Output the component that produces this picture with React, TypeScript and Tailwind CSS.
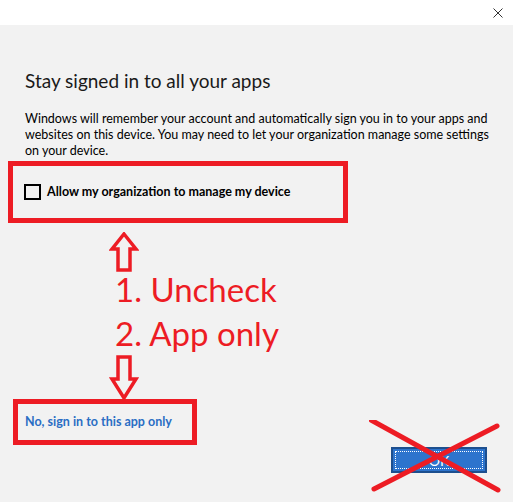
import React from 'react';

const RED = '#ed1c24';

function UpArrow() {
  return (
    <svg width="30" height="41" viewBox="0 0 30 41" className="block">
      <polygon
        points="15,2 27,17 21,17 21,38 9,38 9,17 3,17"
        fill="none"
        stroke={RED}
        strokeWidth="3.5"
        strokeLinejoin="miter"
      />
    </svg>
  );
}

function DownArrow() {
  return (
    <svg width="30" height="46" viewBox="0 0 30 46" className="block">
      <polygon
        points="9,2 21,2 21,24 27,24 15,43 3,24 9,24"
        fill="none"
        stroke={RED}
        strokeWidth="3.5"
        strokeLinejoin="miter"
      />
    </svg>
  );
}

export default function App() {
  return (
    <div
      className="w-[513px] h-[502px] bg-[#f2f2f2] flex flex-col overflow-hidden"
      style={{ fontFamily: 'Lato, "Noto Sans", sans-serif' }}
    >
      {/* title bar */}
      <div className="h-[25px] bg-white flex items-center justify-end pr-[10px] shrink-0">
        <svg width="10" height="10" viewBox="0 0 10 10">
          <path d="M0.5 0.5 L9.5 9.5 M9.5 0.5 L0.5 9.5" stroke="#333" strokeWidth="1" />
        </svg>
      </div>

      <div className="flex flex-col pl-[25px] pr-[22px] relative flex-1">
        <h1 className="mt-[42px] text-[19px] leading-[28px] text-[#1a1a1a] font-normal">
          Stay signed in to all your apps
        </h1>
        <p className="mt-[16px] text-[12.5px] leading-[16px] text-black">
          Windows will remember your account and automatically sign you in to your apps and
          websites on this device. You may need to let your organization manage some settings
          on your device.
        </p>

        {/* annotated checkbox */}
        <div className="ml-[-17px] mt-[2px] w-[340px] h-[62px] border-[5px] border-[#ed1c24] flex items-center pl-[11px] gap-[6px]">
          <div className="w-[17px] h-[16px] border-2 border-black bg-transparent" />
          <span className="text-[12.5px] font-bold text-black">
            Allow my organization to manage my device
          </span>
        </div>

        {/* instructions */}
        <div className="ml-[84px] mt-[9px] flex flex-col">
          <UpArrow />
          <div className="ml-[6px] mt-[-6px] text-[#ed1c24] text-[33px] leading-[44px]">
            <div>1. Uncheck</div>
            <div>2. App only</div>
          </div>
          <DownArrow />
        </div>

        {/* app-only link */}
        <div className="ml-[-12px] mt-[-2px] w-[184px] h-[46px] border-[5px] border-[#ed1c24] flex items-center pl-[7px]">
          <span className="text-[12.5px] font-bold text-[#2a6ec4]">No, sign in to this app only</span>
        </div>

        {/* OK button, crossed out */}
        <div className="self-end mr-[4px] mt-[2px] relative">
          <div className="w-[96px] h-[26px] bg-[#2d74cd] border-2 border-[#1d4f8f] p-[2px]">
            <div className="w-full h-full border border-dotted border-white flex items-center justify-center text-white text-[14px]">
              OK
            </div>
          </div>
          <svg
            width="140"
            height="80"
            viewBox="0 0 140 80"
            className="absolute left-[-22px] top-[-27px] pointer-events-none"
          >
            <path d="M2 0 L129 70 M128 6 L5 69" stroke={RED} strokeWidth="5" strokeLinecap="round" />
          </svg>
        </div>
      </div>
    </div>
  );
}
